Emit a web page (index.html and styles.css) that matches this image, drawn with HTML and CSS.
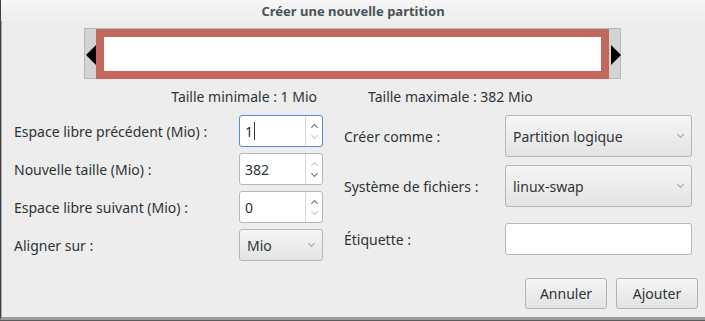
FILE: index.html
```html
<!DOCTYPE html>
<html lang="fr">
<head>
<meta charset="utf-8">
<link rel="stylesheet" href="styles.css">
</head>
<body>
<div class="win">
  <header class="titlebar"><span class="title">Créer une nouvelle partition</span></header>
  <div class="bar-row">
    <div class="bar">
      <div class="handle handle-left"><span class="tri tri-left"></span></div>
      <div class="part"></div>
      <div class="handle handle-right"><span class="tri tri-right"></span></div>
    </div>
  </div>
  <div class="limits">
    <span class="lim-min">Taille minimale : 1 Mio</span>
    <span class="lim-max">Taille maximale : 382 Mio</span>
  </div>
  <div class="form">
    <div class="col col-left">
      <div class="row">
        <label class="lbl">Espace libre précédent (Mio) :</label>
        <div class="spin focus">
          <span class="spin-val">1<span class="caret"></span></span>
          <span class="spin-btns"><span class="chev up dark"></span><span class="chev down light"></span></span>
        </div>
      </div>
      <div class="row">
        <label class="lbl">Nouvelle taille (Mio) :</label>
        <div class="spin">
          <span class="spin-val">382</span>
          <span class="spin-btns"><span class="chev up light"></span><span class="chev down dark"></span></span>
        </div>
      </div>
      <div class="row">
        <label class="lbl">Espace libre suivant (Mio) :</label>
        <div class="spin">
          <span class="spin-val">0</span>
          <span class="spin-btns"><span class="chev up dark"></span><span class="chev down light"></span></span>
        </div>
      </div>
      <div class="row">
        <label class="lbl">Aligner sur :</label>
        <div class="combo combo-small"><span>Mio</span><span class="chev down mid"></span></div>
      </div>
    </div>
    <div class="col col-right">
      <div class="row row-tall">
        <label class="lbl">Créer comme :</label>
        <div class="combo"><span>Partition logique</span><span class="chev down mid"></span></div>
      </div>
      <div class="row row-tall">
        <label class="lbl">Système de fichiers :</label>
        <div class="combo"><span>linux-swap</span><span class="chev down mid"></span></div>
      </div>
      <div class="row row-entry">
        <label class="lbl">Étiquette :</label>
        <div class="entry"></div>
      </div>
    </div>
  </div>
  <div class="actions">
    <button class="btn">Annuler</button>
    <button class="btn">Ajouter</button>
  </div>
</div>
</body>
</html>
```
FILE: styles.css
```css
* { box-sizing: border-box; }
html, body {
  margin: 0;
  padding: 0;
  width: 705px;
  height: 321px;
  overflow: hidden;
  background: #5a5a5a;
}
body {
  font-family: "Noto Sans", "DejaVu Sans", sans-serif;
  font-size: 14px;
  color: #2e3436;
}
.win {
  width: 705px;
  height: 320px;
  background: #ededed;
  border-left: 1px solid #3a3f44;
  border-bottom: 3px solid #9c9c9c;
  box-shadow: inset 1px 0 0 #a8a8a8;
  display: flex;
  flex-direction: column;
}
.titlebar {
  height: 21px;
  background: linear-gradient(#f7f7f7, #ededed);
  display: flex;
  justify-content: center;
  align-items: center;
}
.title {
  font-weight: bold;
  font-size: 13px;
  color: #4a5357;
}
.bar-row {
  margin-top: 7px;
  display: flex;
  justify-content: center;
  padding-right: 1px;
}
.bar {
  width: 537px;
  height: 51px;
  background: #d3d3d3;
  border: 1px solid #b8b8b8;
  display: flex;
}
.handle {
  width: 11px;
  display: flex;
  align-items: center;
  justify-content: flex-end;
}
.tri {
  width: 0;
  height: 0;
  border-top: 10px solid transparent;
  border-bottom: 10px solid transparent;
  margin-top: 2px;
}
.tri-left { border-right: 10px solid #000; }
.tri-right { border-left: 10px solid #000; margin-right: -1px; }
.part {
  flex: 1;
  margin-bottom: -1px;
  background: #fff;
  border: 8px solid #c1675c;
}
.limits {
  margin-top: 8px;
  height: 18px;
  display: grid;
  grid-template-columns: 316px 1fr;
  column-gap: 51px;
  align-items: center;
}
.lim-min { text-align: right; }
.form {
  margin-top: 10px;
  display: flex;
  padding-left: 13px;
}
.col {
  display: flex;
  flex-direction: column;
}
.col-left { gap: 6px; }
.col-left .row {
  display: grid;
  grid-template-columns: 225px 84px;
  height: 32px;
  align-items: center;
}
.col-right { margin-left: 21px; }
.col-right .row {
  display: grid;
  grid-template-columns: 161px 187px;
  align-items: center;
}
.row-tall { height: 42px; }
.row-tall + .row-tall { margin-top: 8px; }
.row-entry { height: 32px; margin-top: 16px; }
.lbl { white-space: nowrap; }
.spin {
  height: 32px;
  background: #fff;
  border: 1px solid #b7b7b7;
  border-radius: 3px;
  display: flex;
}
.spin.focus { border-color: #4a90d9; }
.spin-val {
  flex: 1;
  padding-left: 5px;
  display: flex;
  align-items: center;
}
.caret {
  display: inline-block;
  width: 1px;
  height: 18px;
  background: #2e3436;
  margin-left: 1px;
}
.spin-btns {
  width: 17px;
  border-left: 1px solid #dadada;
  display: flex;
  flex-direction: column;
  align-items: center;
  justify-content: space-around;
  padding: 3px 0;
}
.chev {
  display: block;
  width: 5px;
  height: 5px;
  border-right: 1.5px solid #888;
  border-bottom: 1.5px solid #888;
}
.chev.up { transform: rotate(-135deg); margin-top: 4px; }
.chev.down { transform: rotate(45deg); margin-bottom: 4px; }
.chev.dark { border-color: #6b6f70; }
.chev.light { border-color: #c4c6c7; }
.chev.mid { border-color: #a0a3a4; margin-bottom: 3px; border-width: 1.2px; }
.combo {
  height: 42px;
  border: 1px solid #b6b6b6;
  border-radius: 3px;
  background: linear-gradient(#f6f6f6, #e3e3e3);
  display: flex;
  align-items: center;
  justify-content: space-between;
  padding: 0 8px 0 7px;
}
.combo-small {
  height: 32px;
}
.entry {
  height: 32px;
  background: #fff;
  border: 1px solid #b7b7b7;
  border-radius: 3px;
}
.actions {
  margin-top: auto;
  margin-bottom: 8px;
  display: flex;
  justify-content: flex-end;
  gap: 9px;
  padding-right: 7px;
}
.btn {
  width: 82px;
  height: 31px;
  font: inherit;
  color: #2e3436;
  border: 1px solid #b3b3b3;
  border-radius: 3px;
  background: linear-gradient(#f6f6f6, #e2e2e2);
  padding: 0;
}
```
